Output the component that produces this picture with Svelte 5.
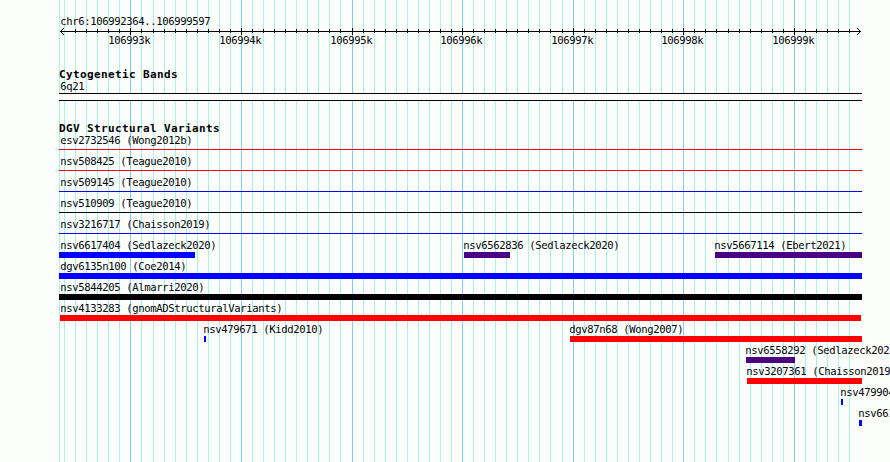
<script>
  const region = 'chr6:106992364..106999597';

  const left = 59;
  const right = 862;

  // every 100bp, rounded to whole pixels
  const ticks = [];
  for (let i = -6; i <= 65; i++) {
    const extra = [2, 20, 39, 54].filter((n) => i >= n).length;
    ticks.push({
      x: 130 + i * 11 + extra,
      major: i % 10 === 0,
      label: `${106993 + i / 10}k`
    });
  }

  const rows = [
    [{ name: 'esv2732546 (Wong2012b)', start: left, end: right, color: 'red', thin: true }],
    [{ name: 'nsv508425 (Teague2010)', start: left, end: right, color: 'red', thin: true }],
    [{ name: 'nsv509145 (Teague2010)', start: left, end: right, color: 'blue', thin: true }],
    [{ name: 'nsv510909 (Teague2010)', start: left, end: right, color: 'black', thin: true }],
    [{ name: 'nsv3216717 (Chaisson2019)', start: left, end: right, color: 'blue', thin: true }],
    [
      { name: 'nsv6617404 (Sedlazeck2020)', start: left, end: 195, color: 'blue' },
      { name: 'nsv6562836 (Sedlazeck2020)', start: 464, end: 510, color: 'indigo' },
      { name: 'nsv5667114 (Ebert2021)', start: 715, end: right, color: 'indigo' }
    ],
    [{ name: 'dgv6135n100 (Coe2014)', start: left, end: right, color: 'blue' }],
    [{ name: 'nsv5844205 (Almarri2020)', start: left, end: right, color: 'black' }],
    [{ name: 'nsv4133283 (gnomADStructuralVariants)', start: 60, end: 861, color: 'red' }],
    [
      { name: 'nsv479671 (Kidd2010)', start: 204, end: 206, color: 'blue' },
      { name: 'dgv87n68 (Wong2007)', start: 570, end: right, color: 'red' }
    ],
    [{ name: 'nsv6558292 (Sedlazeck202', start: 746, end: 795, color: 'indigo' }],
    [{ name: 'nsv3207361 (Chaisson2019', start: 747, end: right, color: 'red' }],
    [{ name: 'nsv479904', start: 841, end: 843, color: 'blue' }],
    [{ name: 'nsv661', start: 859, end: right, color: 'blue' }]
  ];

  // labels never start before the edge of the panel
  function labelOffset(feature) {
    return Math.max(60, feature.start - 1) - feature.start;
  }
</script>

<div class="browser">
  <svg class="gridlines" width="890" height="462">
    <rect class="minor" x={left} y="0" width="1" height="462" />
    {#each ticks as tick}
      <rect class={tick.major ? 'major' : 'minor'} x={tick.x} y="0" width="1" height="462" />
    {/each}
  </svg>

  <div class="tracks">
    <div class="label region">{region}</div>
    <svg class="axis" width="890" height="20" viewBox="0 27 890 20">
      <rect x="60" y="31" width="801" height="1" />
      <!-- the first tick would run into the arrow head -->
      {#each ticks.slice(1) as tick}
        {#if tick.major}
          <rect x={tick.x} y="28" width="1" height="7" />
          <text x={tick.x - 21.7} y="44">{tick.label}</text>
        {:else}
          <rect x={tick.x} y="29" width="1" height="4" />
        {/if}
      {/each}
      {#each [1, 2, 3] as d}
        <rect x={60 + d} y={31 - d} width="1" height="1" />
        <rect x={60 + d} y={31 + d} width="1" height="1" />
        <rect x={860 - d} y={31 - d} width="1" height="1" />
        <rect x={860 - d} y={31 + d} width="1" height="1" />
      {/each}
    </svg>

    <h2>Cytogenetic Bands</h2>
    <div class="label band-name">6q21</div>
    <div class="band"></div>

    <h2>DGV Structural Variants</h2>
    {#each rows as row}
      <div class="row">
        {#each row as feature}
          <div class="feature" style="margin-left: {feature.start}px">
            <div class="label" style="margin-left: {labelOffset(feature)}px">{feature.name}</div>
            <div
              class="bar {feature.color}"
              class:thin={feature.thin}
              style="width: {feature.end - feature.start}px"
            ></div>
          </div>
        {/each}
      </div>
    {/each}
  </div>
</div>

<style>
  .browser {
    position: relative;
    width: 890px;
    height: 462px;
    overflow: hidden;
    background: #fcfefc;
    color: #040204;
    font-family: "DejaVu Sans Mono", monospace;
  }

  .gridlines {
    position: absolute;
    top: 0;
    left: 0;
  }

  .minor { fill: #aceeec; }
  .major { fill: #84ceec; }

  .tracks {
    position: relative;
    display: flex;
    flex-direction: column;
  }

  .label,
  .axis text {
    font-size: 10.6px;
    letter-spacing: -0.382px;
    line-height: 12px;
    white-space: pre;
  }

  .label {
    height: 12px;
    text-indent: 0.3px;
  }

  .region {
    margin: 15px 0 0 60px;
  }

  .axis {
    display: block;
    fill: #040204;
    shape-rendering: crispEdges;
  }

  h2 {
    height: 11px;
    margin: 22px 0 0 59px;
    font-size: 11px;
    font-weight: bold;
    letter-spacing: 0.378px;
    line-height: 12px;
    white-space: pre;
  }

  .band-name { margin-left: 60px; }

  .band {
    box-sizing: border-box;
    width: 803px;
    height: 8px;
    margin: 1px 0 0 59px;
    border: solid #040204;
    border-width: 1px 0;
    background: #fcfefc;
  }

  .row {
    display: grid;
    height: 21px;
  }

  .feature {
    grid-area: 1 / 1;
  }

  .bar {
    height: 6px;
    margin-top: 1px;
  }

  .bar.thin {
    margin-top: 3px;
    height: 1px;
  }

  .red { background: #ff0000; }
  .blue { background: #0000ff; }
  .black { background: #040204; }
  .indigo { background: #4b0082; }
</style>
